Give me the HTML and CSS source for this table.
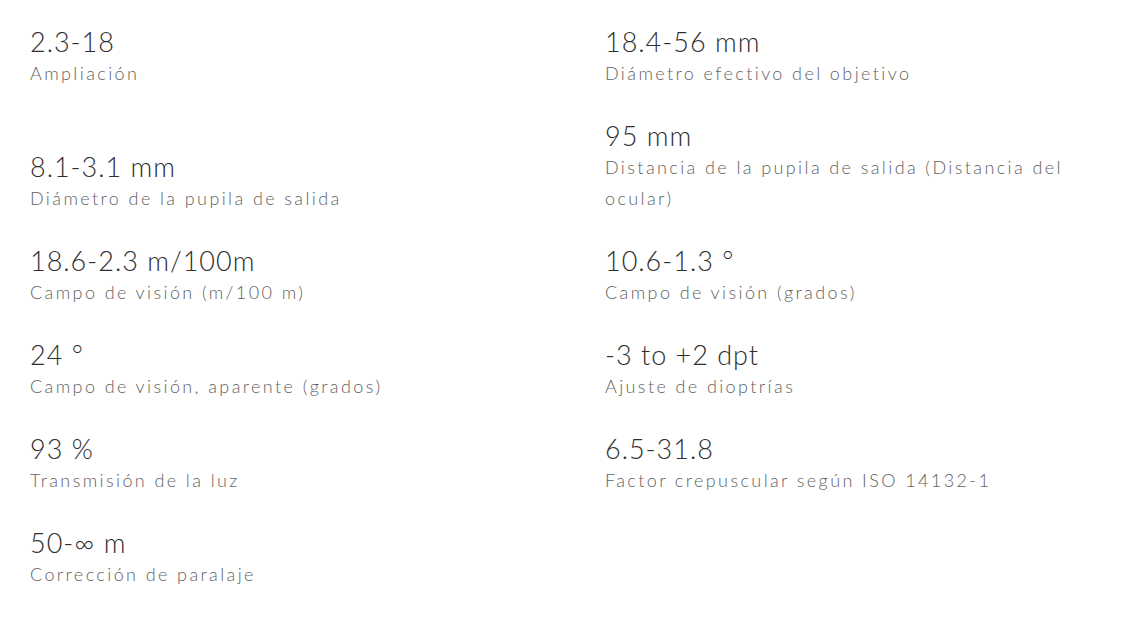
FILE: index.html
```html
<!DOCTYPE html>
<html lang="es">
<head>
<meta charset="utf-8">
<title>Especificaciones</title>
<link rel="stylesheet" href="styles.css">
</head>
<body>
<div class="specs">
  <div class="spec"><div class="val">2.3-18</div><div class="lbl">Ampliación</div></div>
  <div class="spec"><div class="val">18.4-56 mm</div><div class="lbl">Diámetro efectivo del objetivo</div></div>
  <div class="spec"><div class="val">8.1-3.1 mm</div><div class="lbl">Diámetro de la pupila de salida</div></div>
  <div class="spec"><div class="val">95 mm</div><div class="lbl">Distancia de la pupila de salida (Distancia del ocular)</div></div>
  <div class="spec"><div class="val">18.6-2.3 m/100m</div><div class="lbl">Campo de visión (m/100 m)</div></div>
  <div class="spec"><div class="val">10.6-1.3 °</div><div class="lbl">Campo de visión (grados)</div></div>
  <div class="spec"><div class="val">24 °</div><div class="lbl">Campo de visión, aparente (grados)</div></div>
  <div class="spec"><div class="val">-3 to +2 dpt</div><div class="lbl">Ajuste de dioptrías</div></div>
  <div class="spec"><div class="val">93 %</div><div class="lbl">Transmisión de la luz</div></div>
  <div class="spec"><div class="val">6.5-31.8</div><div class="lbl">Factor crepuscular según ISO 14132-1</div></div>
  <div class="spec"><div class="val">50-∞ m</div><div class="lbl">Corrección de paralaje</div></div>
</div>
</body>
</html>
```
FILE: styles.css
```css
html, body {
  margin: 0;
  padding: 0;
  background: #ffffff;
}
body {
  font-family: "Lato", "Open Sans", sans-serif;
  font-weight: 300;
}
.specs {
  display: grid;
  grid-template-columns: 575px 494px;
  align-items: end;
  row-gap: 31px;
  padding: 26px 30px 0 30px;
}
.spec {
  display: flex;
  flex-direction: column;
}
.val {
  font-size: 27px;
  line-height: 32px;
  color: #2e2e2e;
  letter-spacing: 1px;
}
.lbl {
  font-size: 18px;
  line-height: 31px;
  color: #626262;
  letter-spacing: 2.4px;
}
```
